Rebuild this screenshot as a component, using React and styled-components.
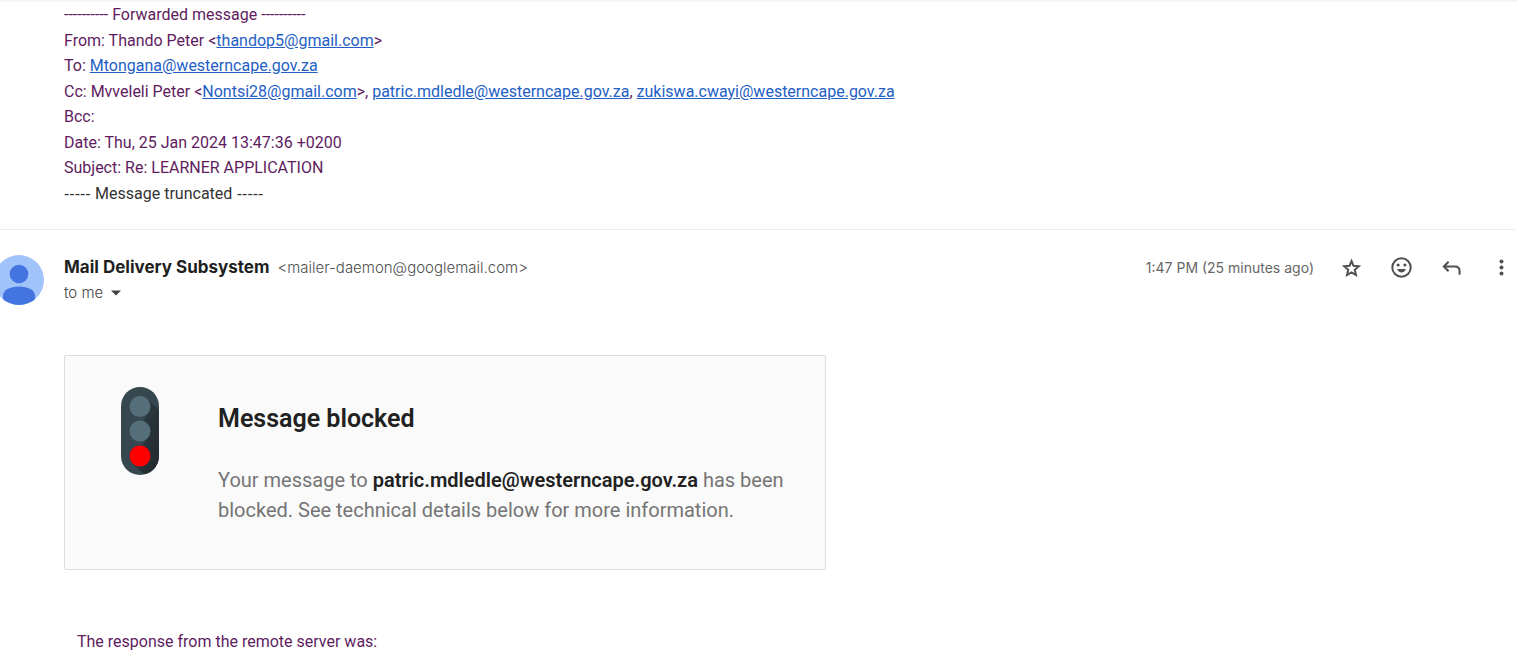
import React from "react";
import styled, { createGlobalStyle } from "styled-components";

const GlobalStyle = createGlobalStyle`
  * { box-sizing: border-box; }
  body {
    margin: 0;
    background: #fff;
    color: #222;
    font-family: Roboto, "Liberation Sans", sans-serif;
    font-size: 16px;
    overflow-x: hidden;
  }
`;

const Thread = styled.main`
  border-top: 2px solid #f5f5f6;
`;

const Message = styled.article`
  padding-left: 64px;
`;

const ForwardedBlock = styled.div`
  padding-bottom: 23px;
`;

const Line = styled.p`
  margin: 0;
  line-height: 25px;
  color: ${({ $plain }) => ($plain ? "#333" : "#601c60")};

  &:nth-child(odd) {
    padding-bottom: 1px;
  }
`;

const Dashes = styled.span`
  font-family: "Liberation Sans", Arial, sans-serif;
`;

const MailLink = styled.a`
  color: #2460c4;
  text-decoration: underline;
`;

const Divider = styled.hr`
  height: 1px;
  margin: 0 3px 0 0;
  border: 0;
  background: #e9ebee;
`;

const MessageHeader = styled.header`
  display: flex;
  align-items: flex-start;
  padding-top: 25px;
`;

const Avatar = styled.svg`
  flex: none;
  width: 50px;
  height: 50px;
  margin: 0 20px 0 -6px;
`;

const Sender = styled.div`
  flex: 1;
  min-width: 0;
`;

const SenderLine = styled.div`
  display: flex;
  align-items: baseline;
  gap: 8px;
  line-height: 25px;
`;

const SenderName = styled.h2`
  margin: 0;
  font-family: Inter, sans-serif;
  font-size: 17px;
  font-weight: 700;
  color: #1f1f1f;
`;

const SenderAddress = styled.span`
  font-family: Inter, sans-serif;
  font-size: 15px;
  font-weight: 300;
  color: #505050;
`;

const Recipients = styled.button`
  display: flex;
  align-items: center;
  gap: 8px;
  padding: 0;
  border: 0;
  background: none;
  font-family: Inter, sans-serif;
  font-size: 15px;
  font-weight: 300;
  line-height: 25px;
  color: #444;
`;

const Actions = styled.div`
  display: flex;
  align-items: center;
  height: 25px;
`;

const Time = styled.time`
  margin-right: 12px;
  font-family: Inter, sans-serif;
  font-size: 14px;
  color: #666;
`;

const IconButton = styled.button`
  display: flex;
  align-items: center;
  justify-content: center;
  width: 50px;
  height: 50px;
  padding: 0;
  border: 0;
  background: none;
  color: #505050;

  &:last-child {
    margin-right: -8px;
  }
`;

const Notice = styled.section`
  display: flex;
  gap: 59px;
  max-width: 762px;
  margin-top: 50px;
  padding: 31px 40px 44px 56px;
  border: 1px solid #dcdcdc;
  border-radius: 2px;
  background: #fafafa;
`;

const TrafficLight = styled.svg`
  flex: none;
  width: 38px;
  height: 88px;
`;

const NoticeTitle = styled.h1`
  margin: 16px 0 31px;
  font-size: 25px;
  font-weight: 600;
  line-height: 31px;
  color: #212121;
`;

const NoticeText = styled.p`
  margin: 0;
  font-size: 20px;
  line-height: 30px;
  color: #757575;

  b {
    font-weight: 600;
    color: #212121;
  }
`;

const ServerResponse = styled.p`
  margin: 59px 0 0;
  padding: 0 13px 8px;
  line-height: 25px;
  color: #601c60;
`;

const Mail = ({ to }) => <MailLink href={`mailto:${to}`}>{to}</MailLink>;

export default function App() {
  return (
    <>
      <GlobalStyle />
      <Thread>
        <Message>
          <ForwardedBlock>
            <Line>---------- Forwarded message ----------</Line>
            <Line>
              From: Thando Peter &lt;<Mail to="thandop5@gmail.com" />&gt;
            </Line>
            <Line>
              To: <Mail to="Mtongana@westerncape.gov.za" />
            </Line>
            <Line>
              Cc: Mvveleli Peter &lt;<Mail to="Nontsi28@gmail.com" />&gt;,{" "}
              <Mail to="patric.mdledle@westerncape.gov.za" />,{" "}
              <Mail to="zukiswa.cwayi@westerncape.gov.za" />
            </Line>
            <Line>Bcc:</Line>
            <Line>Date: Thu, 25 Jan 2024 13:47:36 +0200</Line>
            <Line>Subject: Re: LEARNER APPLICATION</Line>
            <Line $plain>
              <Dashes>----- </Dashes>Message truncated<Dashes> -----</Dashes>
            </Line>
          </ForwardedBlock>
        </Message>
        <Divider />
        <MessageHeader>
          <Avatar viewBox="0 0 50 50" aria-hidden="true">
            <clipPath id="avatar-round">
              <circle cx="25" cy="25" r="25" />
            </clipPath>
            <g clipPath="url(#avatar-round)">
              <rect width="50" height="50" fill="#a0c3fa" />
              <circle cx="25" cy="19" r="9.3" fill="#4374e0" />
              <path d="M9 50V41C9 35 16 31.5 25 31.5S41 35 41 41V50Z" fill="#4374e0" />
            </g>
          </Avatar>
          <Sender>
            <SenderLine>
              <SenderName>Mail Delivery Subsystem</SenderName>
              <SenderAddress>&lt;mailer-daemon@googlemail.com&gt;</SenderAddress>
            </SenderLine>
            <Recipients type="button">
              to me
              <svg width="10" height="6" viewBox="0 0 10 6" aria-hidden="true">
                <path d="M0 0.5H10L5 5.5Z" fill="#444" />
              </svg>
            </Recipients>
          </Sender>
          <Actions>
            <Time>1:47 PM (25 minutes ago)</Time>
            <IconButton type="button" aria-label="Star">
              <svg width="25" height="25" viewBox="0 0 25 25" fill="none" stroke="currentColor" strokeWidth="2">
                <path d="M12.5 6L14.5 10.8L19.8 11.3L15.8 14.8L17 20L12.5 17.3L8 20L9.2 14.8L5.2 11.3L10.5 10.8Z" />
              </svg>
            </IconButton>
            <IconButton type="button" aria-label="Add reaction">
              <svg width="25" height="25" viewBox="0 0 25 25" fill="currentColor">
                <circle cx="12.5" cy="12.5" r="9.2" fill="none" stroke="currentColor" strokeWidth="2" />
                <circle cx="9.1" cy="10" r="1.6" />
                <circle cx="15.9" cy="10" r="1.6" />
                <path d="M8.2 14H16.8C16.1 16.2 14.5 17.4 12.5 17.4S8.9 16.2 8.2 14Z" />
              </svg>
            </IconButton>
            <IconButton type="button" aria-label="Reply">
              <svg width="25" height="25" viewBox="0 0 25 25" fill="none" stroke="currentColor" strokeWidth="2">
                <path d="M9.6 6.7L4.8 11.5L9.6 16.3M5 11.5H16Q20.6 11.5 20.6 16V19.8" />
              </svg>
            </IconButton>
            <IconButton type="button" aria-label="More">
              <svg width="25" height="25" viewBox="0 0 25 25" fill="currentColor">
                <circle cx="12.5" cy="6.5" r="2" />
                <circle cx="12.5" cy="12.5" r="2" />
                <circle cx="12.5" cy="18.5" r="2" />
              </svg>
            </IconButton>
          </Actions>
        </MessageHeader>
        <Message>
          <Notice>
            <TrafficLight viewBox="0 0 38 88" aria-hidden="true">
              <defs>
                <clipPath id="light-body">
                  <rect width="38" height="88" rx="19" />
                </clipPath>
                <linearGradient id="light-shade" x1="0" y1="0" x2="1" y2="1">
                  <stop offset="0" stopColor="#212b31" stopOpacity="0.2" />
                  <stop offset="1" stopColor="#20272b" />
                </linearGradient>
              </defs>
              <g clipPath="url(#light-body)">
                <rect width="38" height="88" fill="#37474f" />
                <path d="M26 11L38 23V88H24L11 76L26 51L12 51L26 27Z" fill="url(#light-shade)" />
              </g>
              <circle cx="19" cy="19.5" r="10.5" fill="#546e7a" />
              <circle cx="19" cy="44" r="10.5" fill="#546e7a" />
              <circle cx="19" cy="69" r="10.5" fill="#ff0000" />
            </TrafficLight>
            <div>
              <NoticeTitle>Message blocked</NoticeTitle>
              <NoticeText>
                Your message to <b>patric.mdledle@westerncape.gov.za</b> has been
                blocked. See technical details below for more information.
              </NoticeText>
            </div>
          </Notice>
          <ServerResponse>The response from the remote server was:</ServerResponse>
        </Message>
      </Thread>
    </>
  );
}
